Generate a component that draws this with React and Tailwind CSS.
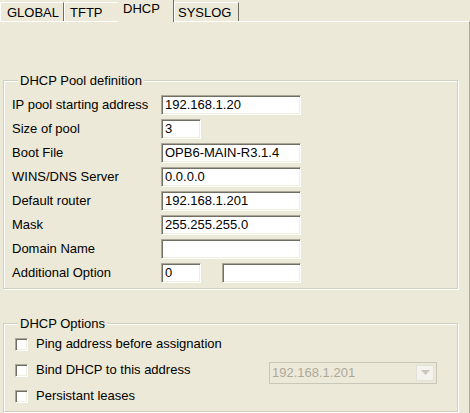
import React from "react";

const FONT = "font-['Liberation_Sans',Arial,sans-serif] text-[13px] text-black";
const INPUT = "h-[20px] bg-white border border-t-[#ACA899] border-l-[#ACA899] border-b-white border-r-white shadow-[inset_1px_1px_0_#716F64,inset_-1px_-1px_0_#F1EFE2] px-[3px] text-[13px] leading-[18px] outline-none";

const ROWS = [
  { label: "IP pool starting address", value: "192.168.1.20", w: "w-[140px]" },
  { label: "Size of pool", value: "3", w: "w-[40px]" },
  { label: "Boot File", value: "OPB6-MAIN-R3.1.4", w: "w-[140px]" },
  { label: "WINS/DNS Server", value: "0.0.0.0", w: "w-[140px]" },
  { label: "Default router", value: "192.168.1.201", w: "w-[140px]" },
  { label: "Mask", value: "255.255.255.0", w: "w-[140px]" },
  { label: "Domain Name", value: "", w: "w-[140px]" },
];

const OPTIONS = ["Ping address before assignation", "Bind DHCP to this address", "Persistant leases"];

function Field({ value, w }) {
  return <div className={`${INPUT} ${w} whitespace-nowrap overflow-hidden`}>{value}</div>;
}

function Checkbox() {
  return <div className="w-[13px] h-[13px] bg-white border border-t-[#ACA899] border-l-[#ACA899] border-b-white border-r-white shadow-[inset_1px_1px_0_#716F64,inset_-1px_-1px_0_#F1EFE2]" />;
}

export default function App() {
  return (
    <div className={`w-[470px] h-[413px] bg-[#ECE9D8] overflow-hidden ${FONT}`}>
      {/* Tabs */}
      <div className="flex items-end h-[22px] relative z-10">
        <div className="w-[64px] h-[19px] border-t border-l border-t-white border-l-white border-r border-r-[#716F64] pl-[6px] leading-[20px] mb-px">GLOBAL</div>
        <div className="w-[54px] h-[19px] border-t border-l border-t-white border-l-white pl-[5px] leading-[20px] mb-px">TFTP</div>
        <div className="w-[56px] h-[22px] border-r border-r-[#716F64] bg-[#ECE9D8] pl-[5px] leading-[17px]">DHCP</div>
        <div className="w-[65px] h-[19px] border-t border-l border-t-white border-l-white border-r border-r-[#716F64] pl-[3px] leading-[20px] mb-px">SYSLOG</div>
      </div>

      {/* Panel */}
      <div className="-mt-px h-[392px] border-t border-t-white border-r border-r-[#ACA899] pl-[3px] pr-[11px] pt-[51px]">
        <fieldset className="border border-[#D0D0BF] shadow-[1px_1px_0_#fff,inset_1px_1px_0_#fff] pl-[8px] pr-[8px] pb-[5px]">
          <legend className="ml-[6px] px-[2px] leading-[15px] bg-[#ECE9D8]">DHCP Pool definition</legend>
          <div className="flex flex-col gap-[4px] pt-[7px]">
            {ROWS.map(r => (
              <div key={r.label} className="flex items-center h-[20px]">
                <div className="w-[149px] whitespace-nowrap">{r.label}</div>
                <Field value={r.value} w={r.w} />
              </div>
            ))}
            <div className="flex items-center h-[20px]">
              <div className="w-[149px] whitespace-nowrap">Additional Option</div>
              <Field value="0" w="w-[40px]" />
              <div className="ml-[21px]"><Field value="" w="w-[79px]" /></div>
            </div>
          </div>
        </fieldset>

        <fieldset className="mt-[27px] border border-[#D0D0BF] shadow-[1px_1px_0_#fff,inset_1px_1px_0_#fff] pl-[11px] pr-[8px] pb-[2px]">
          <legend className="ml-[3px] px-[2px] leading-[15px] bg-[#ECE9D8]">DHCP Options</legend>
          <div className="flex flex-col">
            {OPTIONS.map((o, i) => (
              <div key={o} className="flex items-center h-[26px]">
                <Checkbox />
                <div className="ml-[8px] w-[233px] whitespace-nowrap">{o}</div>
                {i === 1 && (
                  <div className="mt-[5px] w-[168px] h-[22px] border border-[#C9C7BA] flex items-center justify-between pl-[2px] pr-[2px]">
                    <span className="text-[#ACA899]">192.168.1.201</span>
                    <div className="w-[18px] h-[16px] bg-[#F4F3EE] border border-[#E3E1D6] flex items-center justify-center">
                      <svg width="9" height="5" viewBox="0 0 9 5"><path d="M0 0h9L4.5 5z" fill="#C9C7BA" /></svg>
                    </div>
                  </div>
                )}
              </div>
            ))}
          </div>
        </fieldset>
      </div>
    </div>
  );
}
